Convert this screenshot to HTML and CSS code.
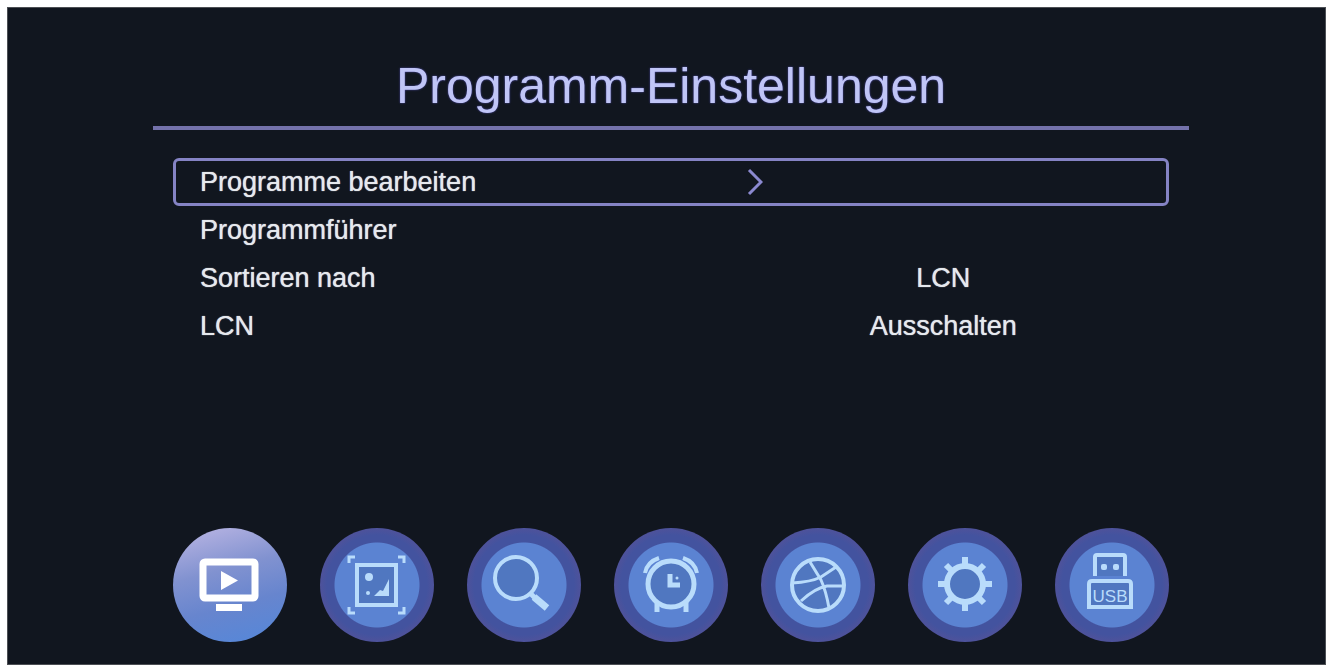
FILE: index.html
```
<!DOCTYPE html>
<html lang="de">
<head>
<meta charset="utf-8">
<meta name="viewport" content="width=device-width, initial-scale=1">
<title>Programm-Einstellungen</title>
<link rel="stylesheet" href="styles.css">
</head>
<body>
<main class="screen">
  <h1 class="title">Programm-Einstellungen</h1>
  <div class="content">
    <ul class="menu">
      <li><button class="row row-selected" type="button"><span class="label">Programme bearbeiten</span><span class="more"><svg class="chevron" viewBox="0 0 16 28" aria-hidden="true"><path d="M2 2 14 14 2 26"/></svg></span></button></li>
      <li><button class="row" type="button"><span class="label">Programmführer</span></button></li>
      <li><button class="row" type="button"><span class="label">Sortieren nach</span><span class="value">LCN</span></button></li>
      <li><button class="row" type="button"><span class="label">LCN</span><span class="value">Ausschalten</span></button></li>
    </ul>
    <nav class="tabs">
      <button class="tab tab-active" type="button" aria-label="Programm">
        <svg class="icon" viewBox="0 0 114 114">
          <rect x="30" y="34" width="52" height="36" rx="2" stroke-width="7"/>
          <path class="solid" d="M48 43 65 52.500 48 62ZM43 76h26v7H43Z"/>
        </svg>
      </button>
      <button class="tab" type="button" aria-label="Bild">
        <svg class="icon" viewBox="0 0 114 114">
          <rect class="shade" x="37" y="37" width="39" height="40" stroke-width="4"/>
          <circle class="solid" cx="49" cy="49" r="4"/>
          <circle class="solid" cx="48" cy="65" r="2"/>
          <path class="solid" d="M54 68 60 62 63 63 69 51V68Z"/>
          <path d="M29 35V29H35M78 29H84V35M84 79V85H78M35 85H29V79" stroke-width="3"/>
        </svg>
      </button>
      <button class="tab" type="button" aria-label="Suche">
        <svg class="icon" viewBox="0 0 114 114">
          <circle class="shade" cx="49" cy="50" r="21" stroke-width="4"/>
          <path d="M64 66 68 70" stroke-width="5"/>
          <path d="M67 69 80 80" stroke-width="7"/>
        </svg>
      </button>
      <button class="tab" type="button" aria-label="Zeit">
        <svg class="icon" viewBox="0 0 114 114">
          <circle class="shade" cx="57" cy="56" r="23" stroke-width="5"/>
          <path d="M56 46V57H66" stroke-width="5"/>
          <circle class="solid" cx="63" cy="50" r="1.500"/>
          <path d="M31 45Q33 34 45 30M83 45Q81 34 69 30" stroke-width="4"/>
          <path d="M43 74V84M72 74V84" stroke-width="5"/>
        </svg>
      </button>
      <button class="tab" type="button" aria-label="Optionen">
        <svg class="icon" viewBox="0 0 114 114">
          <circle class="shade" cx="57" cy="57" r="26" stroke-width="4"/>
          <path d="M49 34 60 52Q65 63 68 80M75 39 60 49Q50 54 31 55M83 58H66Q54 60 40 73" stroke-width="3"/>
        </svg>
      </button>
      <button class="tab" type="button" aria-label="System">
        <svg class="icon" viewBox="0 0 114 114">
          <circle class="shade" cx="57" cy="56" r="18" stroke-width="6"/>
          <path d="M57 37V29M57 75V83M38 56H30M76 56H84M43 42 38 37M71 42 76 37M43 70 38 75M71 70 76 75" stroke-width="6"/>
        </svg>
      </button>
      <button class="tab" type="button" aria-label="USB">
        <svg class="icon" viewBox="0 0 114 114">
          <path class="shade" d="M40 48V29Q40 27 42 27H68Q70 27 70 29V48" stroke-width="4"/>
          <rect class="solid" x="46" y="36" width="6" height="6" rx="2"/>
          <rect class="solid" x="58" y="36" width="6" height="6" rx="2"/>
          <path class="shade" d="M34 79V56Q34 53 37 53H73Q76 53 76 56V79Z" stroke-width="4"/>
          <text class="usb" x="55" y="74">USB</text>
        </svg>
      </button>
    </nav>
  </div>
</main>
</body>
</html>
```
FILE: styles.css
```
* { box-sizing: border-box; }

body {
  margin: 0;
  padding: 7px 6px 2px 7px;
  background: #fff;
  font-family: "Liberation Sans", Arial, sans-serif;
}

.screen {
  display: flex;
  flex-direction: column;
  min-height: calc(100vh - 9px);
  padding: 46px 136px 22px 145px;
  background: #11161f;
  border: 1px solid #4c4f54;
}

.title {
  margin: 0;
  padding-bottom: 8px;
  border-bottom: 4px solid #7472ab;
  color: #c0c5f6;
  font-size: 50px;
  font-weight: 400;
  line-height: 64px;
  text-align: center;
  text-shadow: 0 0 2px #5552b8;
}

.content {
  display: flex;
  flex: 1;
  flex-direction: column;
  justify-content: space-between;
  gap: 32px;
  padding: 28px 20px 0;
}

.menu {
  margin: 0;
  padding: 0;
  list-style: none;
}

.row {
  display: grid;
  grid-template-columns: 11fr 9fr;
  align-items: center;
  width: 100%;
  height: 48px;
  padding: 0;
  border: 3px solid transparent;
  border-radius: 6px;
  background: none;
  color: #e6e9ee;
  font: inherit;
  font-size: 27px;
  line-height: 32px;
  text-shadow: 0 0 1px #e6e9ee;
}

.row-selected { border-color: #8583c4; }

.label {
  padding-left: 24px;
  text-align: left;
}

.value { text-align: center; }

.more {
  display: flex;
  padding-left: 26px;
}

.chevron {
  width: 16px;
  height: 28px;
  fill: none;
  stroke: #8b89d0;
  stroke-width: 3;
}

.tabs {
  display: flex;
  justify-content: space-between;
}

.tab {
  width: 114px;
  height: 114px;
  padding: 0;
  border: 0;
  border-radius: 50%;
  background: radial-gradient(circle, #5b83d2 0 42px, #43539f 43px 50px, #4d529b 56px);
}

.tab-active {
  background: linear-gradient(165deg, #b0afe0 8%, #8192d0 38%, #6785ce 65%, #5687d8 95%);
}

.icon {
  display: block;
  width: 100%;
  height: 100%;
  fill: none;
  stroke: #b9dcfb;
}

.tab-active .icon { stroke: #fff; }

.shade { fill: #5077c0; }

.solid {
  fill: #b9dcfb;
  stroke: none;
}

.tab-active .solid { fill: #fff; }

.usb {
  fill: #b9dcfb;
  stroke: none;
  font-size: 17px;
  text-anchor: middle;
}
```
